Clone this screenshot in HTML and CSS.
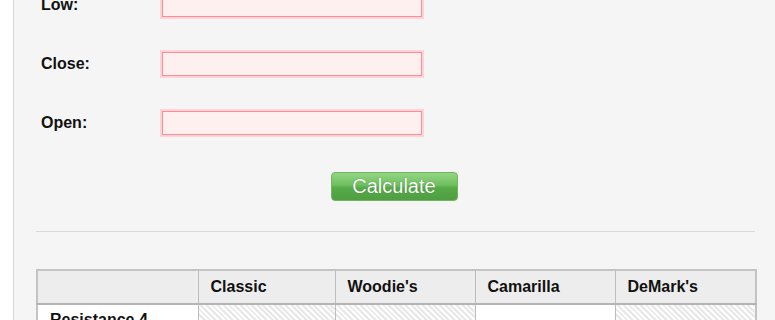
FILE: index.html
```html
<!DOCTYPE html>
<html>
<head>
<meta charset="utf-8">
<link rel="stylesheet" href="styles.css">
</head>
<body>
<div class="page">
  <div class="panel">
    <form class="form">
      <div class="row"><label class="lbl">Low:</label><input class="field" type="text"></div>
      <div class="row"><label class="lbl">Close:</label><input class="field" type="text"></div>
      <div class="row"><label class="lbl">Open:</label><input class="field" type="text"></div>
      <div class="actions"><button type="button" class="btn">Calculate</button></div>
    </form>
    <hr class="sep">
    <table class="pivots">
      <colgroup>
        <col class="c0"><col class="c1"><col class="c2"><col class="c3"><col class="c4">
      </colgroup>
      <thead>
        <tr><th></th><th>Classic</th><th>Woodie's</th><th>Camarilla</th><th>DeMark's</th></tr>
      </thead>
      <tbody>
        <tr><td class="name">Resistance 4</td><td class="hatch"></td><td class="hatch"></td><td></td><td class="hatch"></td></tr>
      </tbody>
    </table>
  </div>
</div>
</body>
</html>
```
FILE: styles.css
```css
html, body {
  margin: 0;
  padding: 0;
  background: #ffffff;
  font-family: "Liberation Sans", Arial, sans-serif;
  color: #111;
  overflow: hidden;
}
.page {
  padding-left: 13px;
  height: 320px;
}
.panel {
  background: #f5f5f5;
  border-left: 1px solid #d6d6d6;
  padding: 0 20px 0 22px;
  height: 100%;
  overflow: hidden;
}
.form {
  margin-top: -9px;
  padding-left: 5px;
}
.row {
  display: flex;
  align-items: center;
  height: 28px;
  margin-bottom: 31px;
}
.lbl {
  width: 119px;
  font-weight: bold;
  font-size: 16px;
}
.field {
  box-sizing: border-box;
  width: 264px;
  height: 28px;
  margin: 0;
  padding: 0;
  background: #fff0f0;
  border: 2px solid #ffd3d8;
  box-shadow: inset 0 0 0 1px #ff8d98;
  outline: none;
  border-radius: 0;
}
.actions {
  display: flex;
  justify-content: center;
  margin-top: 35px;
}
.btn {
  width: 127px;
  height: 29px;
  margin-right: 8px;
  border: 1px solid #6fb562;
  border-radius: 4px;
  background: linear-gradient(#93d684 0%, #6fbf5f 45%, #56aa47 55%, #4f9f41 100%);
  color: #fff;
  font-family: "Liberation Sans", Arial, sans-serif;
  font-size: 20px;
  line-height: 27px;
  text-shadow: 0 0 1px #2f6d24;
  padding: 0;
  cursor: pointer;
}
.sep {
  border: 0;
  border-top: 1px solid #d9d9d9;
  margin: 30px 0 0 0;
  width: 719px;
}
.pivots {
  margin-top: 37px;
  width: 719px;
  border-collapse: collapse;
  table-layout: fixed;
  border: 2px solid #c3c3c3;
  font-size: 16px;
}
.c0 { width: 161px; }
.c1 { width: 137px; }
.c2 { width: 140px; }
.c3 { width: 140px; }
.c4 { width: 141px; }
.pivots th {
  background: #ededed;
  text-align: left;
  font-weight: bold;
  height: 32px;
  padding: 0 0 0 12px;
  border-left: 1px solid #bdbdbd;
  border-bottom: 2px solid #b4b4b4;
}
.pivots td {
  background: #ffffff;
  height: 30px;
  padding: 6px 0 0 12px;
  border-left: 1px solid #bdbdbd;
  vertical-align: top;
  font-weight: bold;
}
.pivots td.hatch {
  background: repeating-linear-gradient(45deg, #ffffff 0 2px, #e6e6e6 2px 4px);
}
```
